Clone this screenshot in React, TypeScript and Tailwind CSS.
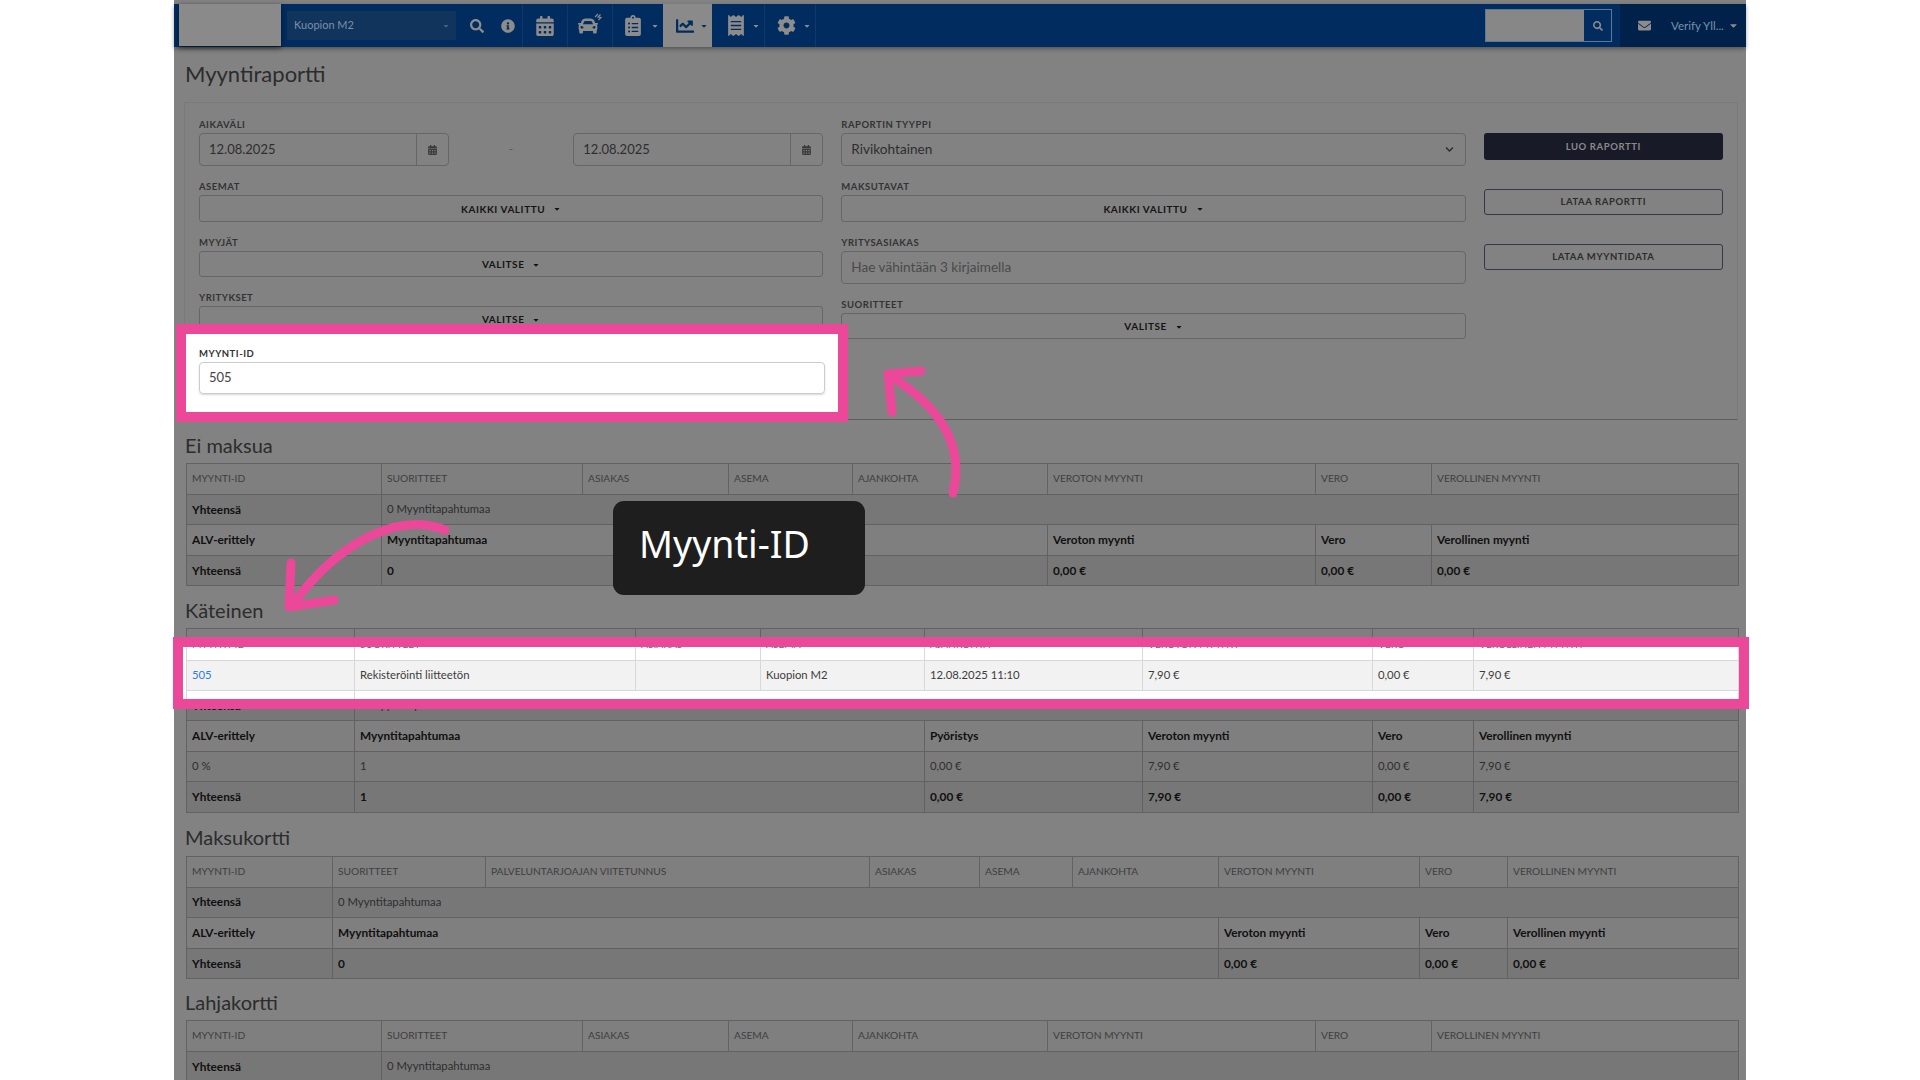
import React from 'react';
import {
  FaSearch,
  FaInfoCircle,
  FaCalendarAlt,
  FaCar,
  FaClipboardList,
  FaChartLine,
  FaReceipt,
  FaCog,
  FaEnvelope,
  FaCaretDown,
  FaChevronDown,
} from 'react-icons/fa';

type Cell = { text?: string; span?: number; bold?: boolean; link?: boolean };
type Row = { cells: Cell[]; kind?: 'head' | 'dark' | 'mid' | 'plain' };

const colsEi = ['w-[195px]', 'w-[201px]', 'w-[146px]', 'w-[124px]', 'w-[195px]', 'w-[268px]', 'w-[116px]', 'w-[307px]'];
const colsKat = ['w-[168px]', 'w-[281px]', 'w-[125px]', 'w-[164px]', 'w-[218px]', 'w-[230px]', 'w-[101px]', 'w-[265px]'];
const colsKortti = ['w-[146px]', 'w-[153px]', 'w-[384px]', 'w-[110px]', 'w-[93px]', 'w-[146px]', 'w-[201px]', 'w-[88px]', 'w-[231px]'];

const head = (...names: string[]): Row => ({ kind: 'head', cells: names.map(text => ({ text })) });
const b = (text: string, span?: number): Cell => ({ text, span, bold: true });

const baseHead = ['MYYNTI-ID', 'SUORITTEET', 'ASIAKAS', 'ASEMA', 'AJANKOHTA', 'VEROTON MYYNTI', 'VERO', 'VEROLLINEN MYYNTI'];

const emptyRows = (span: number): Row[] => [
  { kind: 'dark', cells: [b('Yhteensä'), { text: '0 Myyntitapahtumaa', span: span + 3 }] },
  { kind: 'plain', cells: [b('ALV-erittely'), b('Myyntitapahtumaa', span), b('Veroton myynti'), b('Vero'), b('Verollinen myynti')] },
  { kind: 'dark', cells: [b('Yhteensä'), b('0', span), b('0,00 €'), b('0,00 €'), b('0,00 €')] },
];

const eiMaksuaRows: Row[] = [head(...baseHead), ...emptyRows(4)];

const kateinenRows: Row[] = [
  head(...baseHead),
  {
    kind: 'plain',
    cells: [
      { text: '505', link: true },
      { text: 'Rekisteröinti liitteetön' },
      { text: '' },
      { text: 'Kuopion M2' },
      { text: '12.08.2025 11:10' },
      { text: '7,90 €' },
      { text: '0,00 €' },
      { text: '7,90 €' },
    ],
  },
  { kind: 'dark', cells: [b('Yhteensä'), { text: '1 Myyntitapahtumaa', span: 7 }] },
  { kind: 'plain', cells: [b('ALV-erittely'), b('Myyntitapahtumaa', 3), b('Pyöristys'), b('Veroton myynti'), b('Vero'), b('Verollinen myynti')] },
  { kind: 'mid', cells: [{ text: '0 %' }, { text: '1', span: 3 }, { text: '0,00 €' }, { text: '7,90 €' }, { text: '0,00 €' }, { text: '7,90 €' }] },
  { kind: 'dark', cells: [b('Yhteensä'), b('1', 3), b('0,00 €'), b('7,90 €'), b('0,00 €'), b('7,90 €')] },
];

const maksukorttiRows: Row[] = [
  head('MYYNTI-ID', 'SUORITTEET', 'PALVELUNTARJOAJAN VIITETUNNUS', 'ASIAKAS', 'ASEMA', 'AJANKOHTA', 'VEROTON MYYNTI', 'VERO', 'VEROLLINEN MYYNTI'),
  ...emptyRows(5),
];

const lahjakorttiRows: Row[] = [head(...baseHead), emptyRows(4)[0]];

const ReportTable = ({ cols, rows, light }: { cols: string[]; rows: Row[]; light?: boolean }) => (
  <table className={`table-fixed w-[1552px] border-collapse ${light ? 'bg-white' : ''}`}>
    <colgroup>
      {cols.map((c, i) => (
        <col key={i} className={c} />
      ))}
    </colgroup>
    <tbody>
      {rows.map((row, i) => {
        let rowClass = 'bg-[#7f7f7f]';
        if (light) rowClass = i === 1 ? 'bg-[#f2f2f2]' : 'bg-white';
        else if (row.kind === 'dark') rowClass = 'bg-[#777777]';
        else if (row.kind === 'mid') rowClass = 'bg-[#7b7b7b]';
        return (
          <tr key={i} className={`h-[30.6px] ${rowClass}`}>
            {row.cells.map((cell, j) => {
              let textClass = light ? 'text-[11.3px] text-[#3c3c3c]' : 'text-[11.3px] text-[#2e2e2e]';
              if (row.kind === 'head') textClass = light ? 'text-[10.2px] text-[#666666]' : 'text-[10.2px] text-[#3e3e3e]';
              if (cell.bold) textClass = 'text-[11.8px] text-[#101010] font-bold';
              if (cell.link) textClass = 'text-[11.3px] text-[#2f7de1]';
              return (
                <td
                  key={j}
                  colSpan={cell.span}
                  className={`border px-[5px] whitespace-nowrap overflow-hidden ${light ? 'border-[#d8d8d8]' : 'border-[#626262]'} ${textClass}`}
                >
                  {cell.text}
                </td>
              );
            })}
          </tr>
        );
      })}
    </tbody>
  </table>
);

const SectionTitle = ({ children, className }: { children: React.ReactNode; className: string }) => (
  <h2 className={`h-[26px] leading-[26px] text-[20px] text-[#2c2c2c] -ml-[1px] ${className}`}>{children}</h2>
);

const Field = ({ label, children, className = '' }: { label: string; children: React.ReactNode; className?: string }) => (
  <div className={className}>
    <div className="h-[12px] leading-[14px] mb-[3px] text-[9.5px] font-bold tracking-[0.5px] text-[#333333] uppercase">{label}</div>
    {children}
  </div>
);

const DropButton = ({ text, className = 'h-[27px]' }: { text: string; className?: string }) => (
  <div className={`${className} pt-[1px] flex items-center justify-center gap-[8px] border border-[#666666] rounded-[3px] text-[10px] font-bold tracking-[0.55px] text-[#141414]`}>
    {text}
    <FaCaretDown className="w-[8px] h-[8px]" />
  </div>
);

const DateInput = () => (
  <div className="w-[250px] h-[33px] flex border border-[#666666] rounded-[4px]">
    <div className="flex-1 pl-[9px] flex items-center text-[13px] text-[#2e2e2e]">12.08.2025</div>
    <div className="w-[32px] border-l border-[#666666] flex items-center justify-center">
      <FaCalendarAlt className="w-[9px] h-[10px] text-[#3a3a3a]" />
    </div>
  </div>
);

const NavCaret = ({ className = 'text-[#8c8c8c]' }: { className?: string }) => <FaCaretDown className={`w-[8px] h-[8px] ${className}`} />;

const Navbar = () => (
  <div className="h-[43px] flex bg-[#002c5f] text-[#8c8c8c] shadow-[0_2px_4px_rgba(0,0,0,0.35)] relative">
    <div className="ml-[5px] w-[102px] h-[42px] bg-[#8a8a8a] shadow-[0_2px_5px_rgba(0,0,0,0.5)]" />
    <div className="ml-[6px] mt-[7px] w-[169px] h-[29px] bg-[#10345c] flex items-center justify-between pl-[7px] pr-[6px] text-[#7a90a8] text-[11px]">
      Kuopion M2
      <FaCaretDown className="w-[8px] h-[8px] text-[#4d6178]" />
    </div>
    <div className="w-[42px] flex items-center justify-center">
      <FaSearch className="w-[14px] h-[14px]" />
    </div>
    <div className="w-[25px] pr-[5px] flex items-center justify-center border-r border-[#12376a]">
      <FaInfoCircle className="w-[14px] h-[14px]" />
    </div>
    <div className="w-[45px] flex items-center justify-center border-r border-[#12376a]">
      <FaCalendarAlt className="w-[18px] h-[20px]" />
    </div>
    <div className="w-[45px] pr-[4px] flex items-center justify-center border-r border-[#12376a] relative">
      <FaCar className="w-[20px] h-[20px]" />
      <svg viewBox="0 0 8 8" className="absolute right-[10px] top-[9px] w-[8px] h-[8px]" fill="none" stroke="currentColor" strokeWidth="1.2">
        <path d="M1 4L4 1M6.5 1.5L4 4L7 4.5L4.5 7" />
      </svg>
    </div>
    <div className="w-[50px] pl-[12px] flex items-center">
      <FaClipboardList className="w-[16px] h-[21px]" />
      <span className="ml-[10px]"><NavCaret /></span>
    </div>
    <div className="w-[49px] pl-[12px] flex items-center bg-[#8a8a8a] text-[#002c5f]">
      <FaChartLine className="w-[20px] h-[18px]" />
      <span className="ml-[5px]"><NavCaret className="text-[#002c5f]" /></span>
    </div>
    <div className="w-[53px] pl-[16px] flex items-center border-r border-[#12376a]">
      <FaReceipt className="w-[16px] h-[21px]" />
      <span className="ml-[8px]"><NavCaret /></span>
    </div>
    <div className="w-[51px] pl-[12px] flex items-center border-r border-[#12376a]">
      <FaCog className="w-[19px] h-[19px]" />
      <span className="ml-[7px]"><NavCaret /></span>
    </div>
    <div className="ml-auto flex">
      <div className="mt-[5px] w-[127px] h-[33px] flex border border-[#5f7791]">
        <div className="w-[98px] bg-[#878787]" />
        <div className="flex-1 flex items-center justify-center">
          <FaSearch className="w-[10px] h-[10px]" />
        </div>
      </div>
      <div className="ml-[8px] w-[126px] bg-[#00224a] flex items-center pl-[18px]">
        <FaEnvelope className="w-[13px] h-[13px]" />
        <span className="ml-[20px] text-[11.5px] text-[#7a90a8]">Verify Yll...</span>
        <FaCaretDown className="ml-[4px] w-[11px] h-[11px]" />
      </div>
    </div>
  </div>
);

const FormPanel = () => (
  <div className="mt-[12px] -ml-[2px] w-[1554px] h-[318px] border border-[#7a7a7a] border-b-[#5e5e5e] px-[14px] pt-[15px] flex">
    <div className="w-[626px] flex flex-col gap-[14px]">
      <Field label="Aikaväli">
        <div className="flex justify-between items-center">
          <DateInput />
          <span className="text-[11px] text-[#555555]">-</span>
          <DateInput />
        </div>
      </Field>
      <Field label="Asemat"><DropButton text="KAIKKI VALITTU" /></Field>
      <Field label="Myyjät"><DropButton text="VALITSE" className="h-[26px]" /></Field>
      <Field label="Yritykset"><DropButton text="VALITSE" className="h-[26px]" /></Field>
      <Field label="Myynti-ID" className="mt-[1px]">
        <div className="h-[32px]" />
      </Field>
    </div>
    <div className="ml-[18px] w-[626px] flex flex-col gap-[14px]">
      <Field label="Raportin tyyppi">
        <div className="h-[33px] flex items-center justify-between pl-[9px] pr-[11px] border border-[#666666] rounded-[4px] text-[13.6px] text-[#2e2e2e]">
          Rivikohtainen
          <FaChevronDown className="w-[9px] h-[9px] text-[#2c2c2c]" />
        </div>
      </Field>
      <Field label="Maksutavat"><DropButton text="KAIKKI VALITTU" /></Field>
      <Field label="Yritysasiakas">
        <div className="h-[33px] flex items-center pl-[9px] border border-[#666666] rounded-[4px] text-[13.6px] text-[#4a4a4a]">
          Hae vähintään 3 kirjaimella
        </div>
      </Field>
      <Field label="Suoritteet"><DropButton text="VALITSE" className="h-[26px]" /></Field>
    </div>
    <div className="ml-[18px] w-[240px] pt-[15px] flex flex-col gap-[29px] text-[9.5px] font-bold tracking-[0.6px]">
      <div className="h-[27px] pt-[1px] flex items-center justify-center rounded-[3px] bg-[#181a28] text-[#8a8a8a]">LUO RAPORTTI</div>
      <div className="h-[26px] pt-[1px] flex items-center justify-center rounded-[3px] border border-[#33374a] text-[#2c2c2c]">LATAA RAPORTTI</div>
      <div className="h-[26px] pt-[1px] flex items-center justify-center rounded-[3px] border border-[#33374a] text-[#2c2c2c]">LATAA MYYNTIDATA</div>
    </div>
  </div>
);

const Annotations = () => (
  <>
    {/* highlighted sale id field */}
    <div className="absolute left-[176px] top-[324px] w-[672px] h-[98px] border-[10px] border-[#ec4899] bg-white px-[13px] pt-[13px]">
      <div className="h-[12px] leading-[14px] mb-[3px] text-[9.5px] font-bold tracking-[0.5px] text-[#333333]">MYYNTI-ID</div>
      <div className="w-[626px] h-[32px] flex items-center pl-[9px] border border-[#cccccc] rounded-[4px] text-[13px] text-[#444444] shadow-[0_1px_2px_rgba(0,0,0,0.15)]">
        505
      </div>
    </div>

    {/* highlighted cash row */}
    <div className="absolute left-[173px] top-[637px] w-[1576px] h-[72px] border-[10px] border-[#ec4899] bg-white overflow-hidden">
      <div className="ml-[3px] -mt-[18px]">
        <ReportTable cols={colsKat} rows={kateinenRows} light />
      </div>
    </div>

    <svg className="absolute left-0 top-0 w-[1920px] h-[1080px] pointer-events-none" viewBox="0 0 1920 1080" fill="none" stroke="#ec4899" strokeWidth="9" strokeLinecap="round" strokeLinejoin="round">
      <path d="M953 493C966 442 935 403 890 376" />
      <path d="M921 371L888 374L892 412" />
      <path d="M445 530C400 512 340 540 293 604" />
      <path d="M291 563L289 607L334 600" />
    </svg>

    <div className="absolute left-[613px] top-[501px] w-[252px] h-[94px] rounded-[11px] bg-[#1e1e1e] pl-[26px] pt-[20px] text-[37.5px] leading-[46px] text-white font-['Noto_Sans',sans-serif]">
      Myynti-ID
    </div>
  </>
);

export default function App() {
  return (
    <div className="relative w-[1920px] h-[1080px] overflow-hidden bg-white font-[Lato,sans-serif]">
      <div className="ml-[174px] w-[1572px] h-[1080px] bg-[#828282] pt-[4px]">
        <Navbar />
        <div className="pl-[12px]">
          <h1 className="mt-[12px] h-[31px] leading-[30px] -ml-[1px] text-[22px] text-[#2c2c2c]">Myyntiraportti</h1>
          <FormPanel />
          <SectionTitle className="mt-[12px] mb-[5px]">Ei maksua</SectionTitle>
          <ReportTable cols={colsEi} rows={eiMaksuaRows} />
          <SectionTitle className="mt-[11px] mb-[5px]">Käteinen</SectionTitle>
          <ReportTable cols={colsKat} rows={kateinenRows} />
          <SectionTitle className="mt-[11px] mb-[6px]">Maksukortti</SectionTitle>
          <ReportTable cols={colsKortti} rows={maksukorttiRows} />
          <SectionTitle className="mt-[10px] mb-[5px]">Lahjakortti</SectionTitle>
          <ReportTable cols={colsEi} rows={lahjakorttiRows} />
        </div>
      </div>
      <Annotations />
    </div>
  );
}
